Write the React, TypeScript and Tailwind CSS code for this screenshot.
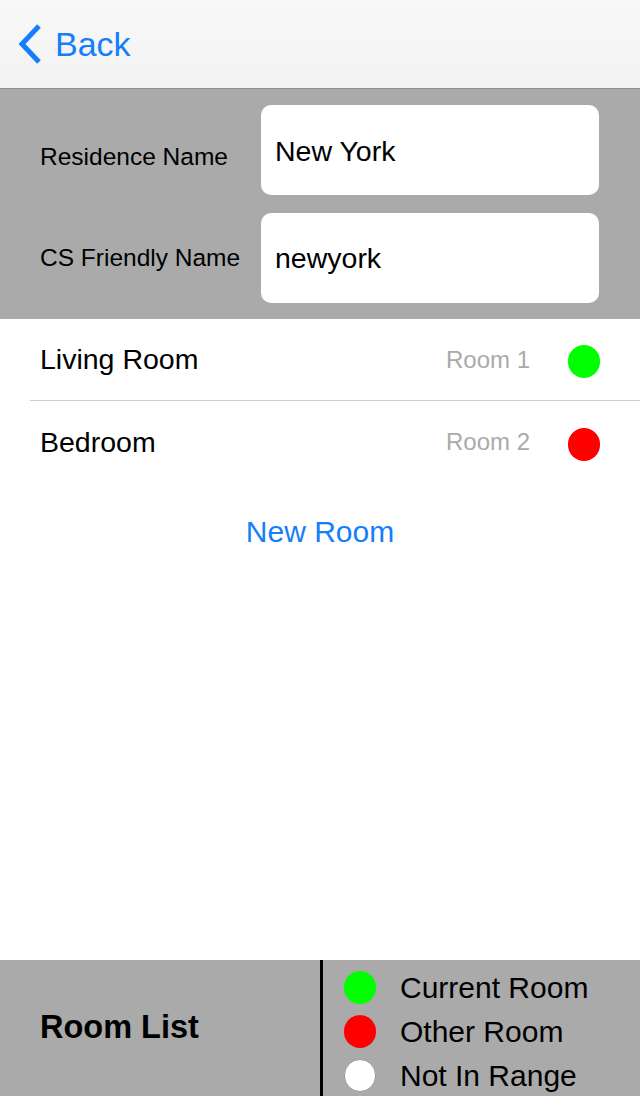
import type { FC } from "react";

const rooms = [
  { name: "Living Room", label: "Room 1", dot: "bg-[#00ff00]" },
  { name: "Bedroom", label: "Room 2", dot: "bg-[#ff0000]" },
];

const legend = [
  { text: "Current Room", dot: "bg-[#00ff00]" },
  { text: "Other Room", dot: "bg-[#ff0000]" },
  { text: "Not In Range", dot: "bg-white border border-[#999]" },
];

const App: FC = () => {
  return (
    <div className="flex h-[1096px] w-[640px] flex-col overflow-hidden bg-white font-['Liberation_Sans',Arial,sans-serif] text-black">
      <div className="flex h-[89px] shrink-0 items-center border-b border-[#8e8e8e] bg-gradient-to-b from-[#f8f8f8] to-[#f3f3f3] pl-[17px]">
        <svg width="26" height="42" viewBox="0 0 26 42" className="mr-[12px] mb-[1px]">
          <path d="M22 3 L5 21 L22 39" fill="none" stroke="#157efb" strokeWidth="5" strokeLinecap="butt" />
        </svg>
        <span className="text-[34px] text-[#157efb]">Back</span>
      </div>

      <div className="flex shrink-0 flex-col gap-[18px] bg-[#aaaaaa] py-[16px] pr-[41px] pl-[40px]">
        <div className="flex items-center">
          <span className="w-[221px] pt-[14px] text-[24.5px]">Residence Name</span>
          <div className="flex h-[90px] flex-1 items-start rounded-[10px] bg-white pt-[25px] pl-[14px] text-[28.5px]">
            New York
          </div>
        </div>
        <div className="flex items-center">
          <span className="w-[221px] text-[24.5px]">CS Friendly Name</span>
          <div className="flex h-[90px] flex-1 items-center rounded-[10px] bg-white pl-[14px] text-[28.5px]">
            newyork
          </div>
        </div>
      </div>

      <div className="flex flex-col">
        {rooms.map((r, i) => (
          <div key={r.name} className="pl-[30px]">
            <div
              className={
                "flex h-[82px] items-center pr-[40px] pl-[10px] " +
                (i === 0 ? "border-b border-[#cccccc]" : "")
              }
            >
              <span className="flex-1 text-[28.5px]">{r.name}</span>
              <span className="mr-[38px] text-[24px] text-[#aaaaaa]">{r.label}</span>
              <span className={"mt-[4px] h-[33px] w-[32px] rounded-full " + r.dot} />
            </div>
          </div>
        ))}
        <div className="mt-[26px] text-center text-[30px] text-[#157efb]">New Room</div>
      </div>

      <div className="flex-1" />

      <div className="flex h-[136px] shrink-0 bg-[#aaaaaa]">
        <div className="flex w-[320px] items-center pl-[40px] pb-[2px] text-[32.5px] font-bold">Room List</div>
        <div className="w-[3px] bg-black" />
        <div className="flex flex-col justify-center gap-[10px] pl-[21px] pt-[6px]">
          {legend.map((l) => (
            <div key={l.text} className="flex h-[34px] items-center">
              <span className={"h-[33px] w-[32px] rounded-full " + l.dot} />
              <span className="ml-[24px] text-[30px]">{l.text}</span>
            </div>
          ))}
        </div>
      </div>
    </div>
  );
};

export default App;
